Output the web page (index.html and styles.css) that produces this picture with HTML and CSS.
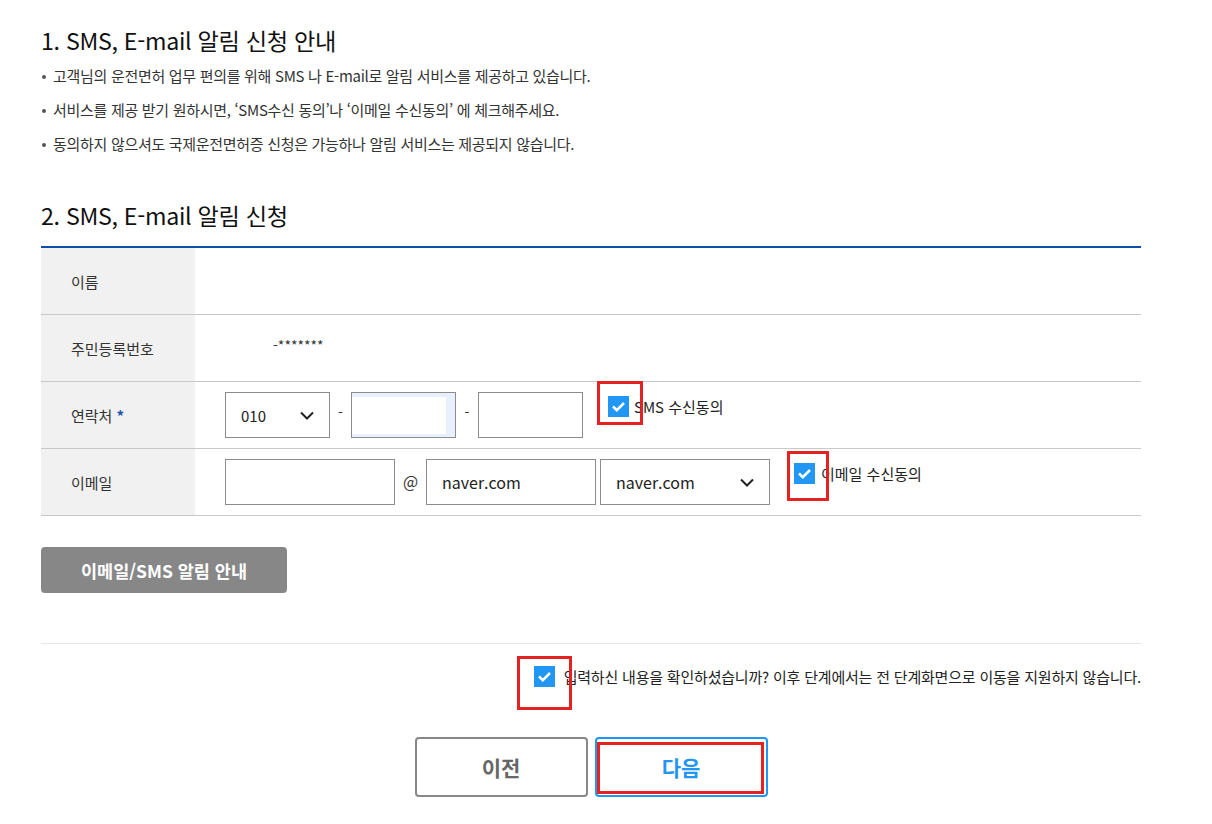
FILE: index.html
```html
<!DOCTYPE html>
<html lang="ko">
<head>
    <meta charset="UTF-8">
    <meta name="viewport" content="width=device-width, initial-scale=1.0">
    <title>SMS, E-mail 알림 신청</title>
    <link rel="stylesheet" href="styles.css">
</head>
<body>
    <div class="container">
        <h2 class="title">1. SMS, E-mail 알림 신청 안내</h2>
        <ul class="notice">
            <li>고객님의 운전면허 업무 편의를 위해 SMS 나 E-mail로 알림 서비스를 제공하고 있습니다.</li>
            <li>서비스를 제공 받기 원하시면, ‘SMS수신 동의’나 ‘이메일 수신동의’ 에 체크해주세요.</li>
            <li>동의하지 않으셔도 국제운전면허증 신청은 가능하나 알림 서비스는 제공되지 않습니다.</li>
        </ul>

        <h2 class="title title-second">2. SMS, E-mail 알림 신청</h2>
        <div class="form-table">
            <div class="row">
                <div class="label">이름</div>
                <div class="value"></div>
            </div>
            <div class="row">
                <div class="label">주민등록번호</div>
                <div class="value"><span class="jumin">-*******</span></div>
            </div>
            <div class="row">
                <div class="label">연락처 <span class="req">*</span></div>
                <div class="value controls">
                    <div class="select select-tel">010
                        <svg class="chevron" width="14" height="9" viewBox="0 0 14 9"><polyline points="1,1.5 7,7.5 13,1.5" fill="none" stroke="#222" stroke-width="2"/></svg>
                    </div>
                    <span class="dash">-</span>
                    <div class="input input-tel autofill"><div class="autofill-inner"></div></div>
                    <span class="dash dash-second">-</span>
                    <div class="input input-tel"></div>
                    <div class="agree">
                        <span class="check">
                            <svg width="21" height="21" viewBox="0 0 21 21"><polyline points="5,10.5 8.8,14.2 16,7" fill="none" stroke="#fff" stroke-width="2.5"/></svg>
                            <span class="mark mark-sms"></span>
                        </span>
                        <span class="agree-text">SMS 수신동의</span>
                    </div>
                </div>
            </div>
            <div class="row">
                <div class="label">이메일</div>
                <div class="value controls">
                    <div class="input input-mail"></div>
                    <span class="at">@</span>
                    <div class="input input-mail">naver.com</div>
                    <div class="select select-mail">naver.com
                        <svg class="chevron" width="14" height="9" viewBox="0 0 14 9"><polyline points="1,1.5 7,7.5 13,1.5" fill="none" stroke="#222" stroke-width="2"/></svg>
                    </div>
                    <div class="agree agree-mail">
                        <span class="check">
                            <svg width="21" height="21" viewBox="0 0 21 21"><polyline points="5,10.5 8.8,14.2 16,7" fill="none" stroke="#fff" stroke-width="2.5"/></svg>
                            <span class="mark mark-mail"></span>
                        </span>
                        <span class="agree-text">이메일 수신동의</span>
                    </div>
                </div>
            </div>
        </div>

        <button class="btn-guide">이메일/SMS 알림 안내</button>

        <div class="confirm">
            <span class="check">
                <svg width="21" height="21" viewBox="0 0 21 21"><polyline points="5,10.5 8.8,14.2 16,7" fill="none" stroke="#fff" stroke-width="2.5"/></svg>
                <span class="mark mark-confirm"></span>
            </span>
            <span class="confirm-text">입력하신 내용을 확인하셨습니까? 이후 단계에서는 전 단계화면으로 이동을 지원하지 않습니다.</span>
        </div>

        <div class="btn-area">
            <button class="btn btn-prev">이전</button>
            <button class="btn btn-next">다음<span class="mark mark-next"></span></button>
        </div>
    </div>
</body>
</html>
```

FILE: styles.css
```css
body {
    margin: 0;
    font-family: "Noto Sans CJK KR", "Noto Sans", sans-serif;
    color: #222;
    background: #fff;
}
.container {
    width: 1100px;
    margin-left: 41px;
}
.title {
    margin: 24px 0 0;
    font-size: 23.2px;
    line-height: 32px;
    font-weight: 400;
    color: #111;
    letter-spacing: -0.3px;
}
.title-second {
    margin-top: 38px;
}
.notice {
    list-style: none;
    margin: 3px 0 0;
    padding: 0;
}
.notice li {
    position: relative;
    padding-left: 12px;
    font-size: 15px;
    line-height: 34px;
    color: #333;
    letter-spacing: -0.3px;
}
.notice li::before {
    content: "";
    position: absolute;
    left: 1px;
    top: 16px;
    width: 4px;
    height: 4px;
    border-radius: 50%;
    background: #555;
}
.form-table {
    margin-top: 15px;
    border-top: 2px solid #0b4fa8;
}
.row {
    display: flex;
    height: 66px;
    border-bottom: 1px solid #c8c8c8;
}
.label {
    width: 124px;
    flex-shrink: 0;
    padding-left: 30px;
    background: #f1f1f1;
    display: flex;
    align-items: center;
    font-size: 15px;
    color: #333;
}
.req {
    color: #1a53b0;
    font-weight: bold;
    margin-left: 4px;
}
.value {
    flex: 1;
    display: flex;
    align-items: center;
    padding-left: 30px;
    font-size: 14px;
    color: #333;
}
.jumin {
    margin-left: 48px;
    margin-top: -6px;
}
.controls {
    align-items: flex-start;
    padding-top: 10px;
}
.select, .input {
    box-sizing: border-box;
    height: 46px;
    border: 1px solid #8c8c8c;
    background: #fff;
    display: flex;
    align-items: center;
    padding-left: 15px;
    font-size: 16px;
    color: #222;
}
.select {
    justify-content: space-between;
    padding-right: 15px;
}
.select-tel {
    width: 105px;
    font-size: 15px;
}
.select-mail {
    width: 170px;
    margin-left: 4px;
}
.input-tel {
    width: 105px;
}
.input-mail {
    width: 170px;
}
.autofill {
    background: #e8f0fe;
    padding: 4px 9px 3px 0;
    align-items: stretch;
}
.autofill-inner {
    flex: 1;
    background: #fff;
}
.dash {
    width: 21px;
    text-align: center;
    line-height: 40px;
    font-size: 14px;
}
.dash-second {
    width: 22px;
}
.at {
    width: 31px;
    text-align: center;
    line-height: 44px;
    font-size: 16px;
}
.agree {
    display: flex;
    align-items: center;
    margin-left: 25px;
    margin-top: 4px;
    font-size: 15px;
    color: #222;
}
.agree-mail {
    margin-left: 24px;
}
.agree .agree-text {
    margin-left: 5px;
}
.agree-mail .agree-text {
    margin-left: 6px;
}
.check {
    position: relative;
    width: 21px;
    height: 21px;
    background: #2196f3;
    display: inline-block;
    flex-shrink: 0;
}
.check svg {
    display: block;
}
.mark {
    position: absolute;
    box-sizing: border-box;
    border: 3px solid #e52222;
}
.mark-sms {
    left: -11px;
    top: -15px;
    width: 46px;
    height: 44px;
}
.mark-mail {
    left: -7px;
    top: -12px;
    width: 42px;
    height: 50px;
}
.mark-confirm {
    left: -17px;
    top: -10px;
    width: 55px;
    height: 54px;
}
.btn-guide {
    display: block;
    margin-top: 31px;
    width: 246px;
    height: 46px;
    border: none;
    border-radius: 4px;
    background: #878787;
    color: #fff;
    font-family: inherit;
    font-size: 17.5px;
    font-weight: bold;
    cursor: pointer;
}
.confirm {
    margin-top: 50px;
    border-top: 1px solid #e6e6e6;
    padding-top: 22px;
    display: flex;
    justify-content: flex-end;
    align-items: center;
}
.confirm-text {
    margin-left: 9px;
    font-size: 15px;
    color: #222;
    letter-spacing: -0.2px;
}
.btn-area {
    margin-top: 50px;
    display: flex;
    justify-content: center;
    gap: 7px;
}
.btn {
    position: relative;
    box-sizing: border-box;
    width: 173px;
    height: 60px;
    border: 2px solid #888;
    border-radius: 4px;
    background: #fff;
    font-family: inherit;
    font-size: 21px;
    font-weight: bold;
    color: #666;
    cursor: pointer;
}
.btn-next {
    border-color: #2196f3;
    color: #2196f3;
}
.mark-next {
    left: 0;
    top: 3px;
    width: 167px;
    height: 52px;
}
```
